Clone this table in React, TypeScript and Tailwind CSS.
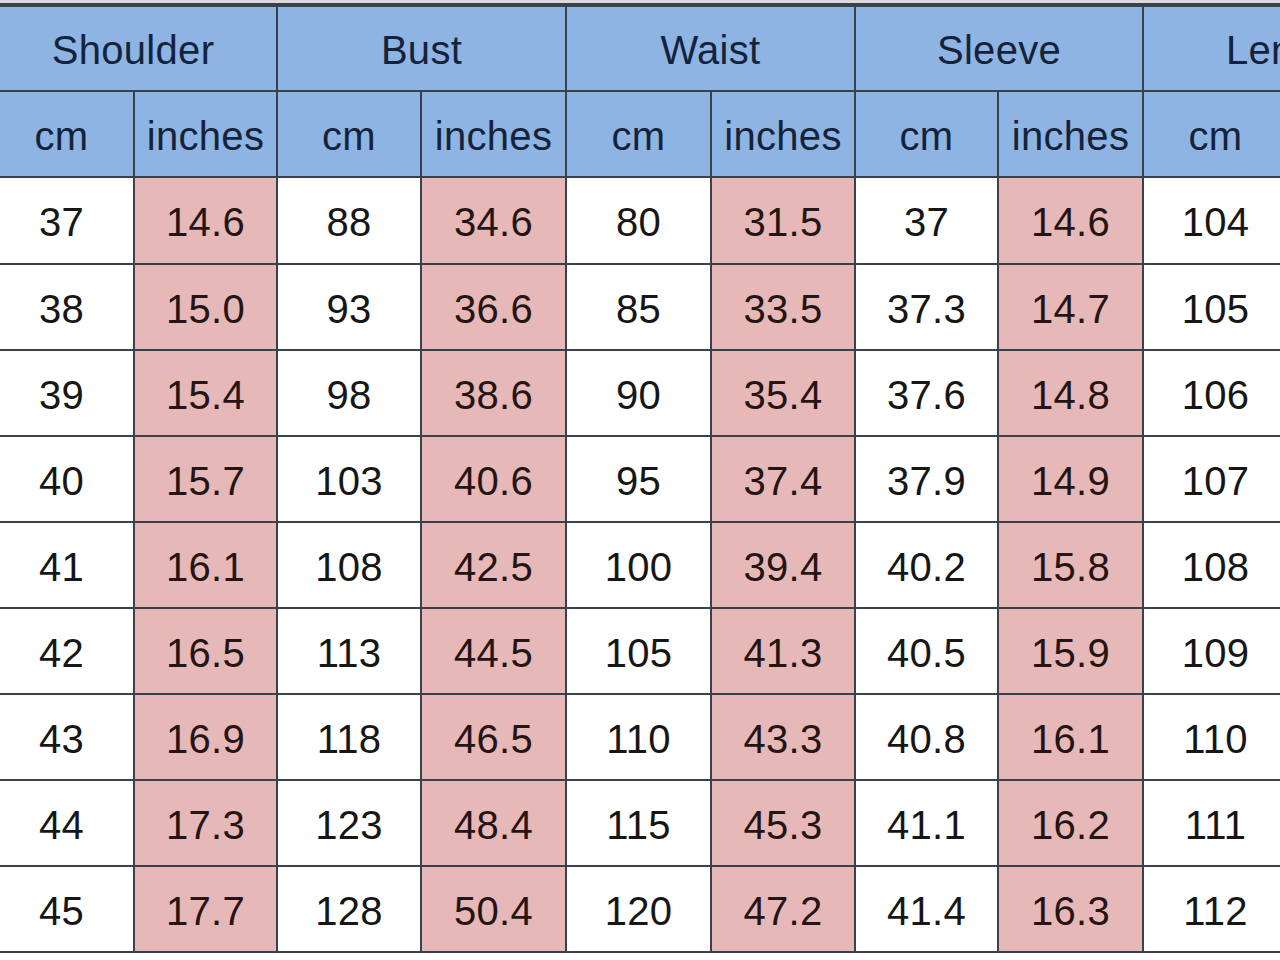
const groups = [
  {
    name: 'Shoulder',
    cm: ['37', '38', '39', '40', '41', '42', '43', '44', '45'],
    inches: ['14.6', '15.0', '15.4', '15.7', '16.1', '16.5', '16.9', '17.3', '17.7'],
  },
  {
    name: 'Bust',
    cm: ['88', '93', '98', '103', '108', '113', '118', '123', '128'],
    inches: ['34.6', '36.6', '38.6', '40.6', '42.5', '44.5', '46.5', '48.4', '50.4'],
  },
  {
    name: 'Waist',
    cm: ['80', '85', '90', '95', '100', '105', '110', '115', '120'],
    inches: ['31.5', '33.5', '35.4', '37.4', '39.4', '41.3', '43.3', '45.3', '47.2'],
  },
  {
    name: 'Sleeve',
    cm: ['37', '37.3', '37.6', '37.9', '40.2', '40.5', '40.8', '41.1', '41.4'],
    inches: ['14.6', '14.7', '14.8', '14.9', '15.8', '15.9', '16.1', '16.2', '16.3'],
  },
  {
    name: 'Length',
    cm: ['104', '105', '106', '107', '108', '109', '110', '111', '112'],
    inches: ['40.9', '41.3', '41.7', '42.1', '42.5', '42.9', '43.3', '43.7', '44.1'],
  },
];

const rows = [0, 1, 2, 3, 4, 5, 6, 7, 8];

export default function App() {
  return (
    <div
      className="w-[1280px] h-[960px] overflow-hidden bg-white"
      style={{ fontFamily: '"Liberation Sans", Arial, sans-serif' }}
    >
      <div className="h-[3px] bg-[#d9dadc]" />
      <div className="-ml-[10px] w-max grid grid-cols-[143px_141px_142px_143px_143px_142px_141px_143px_143px_143px] grid-rows-[83px_84px_85px_repeat(8,84px)] gap-[2px] bg-[#3b414b] pt-[4px] pb-[2px] text-[40px] leading-none tracking-[0.3px]">
        {/* group headings */}
        {groups.map((g) => (
          <div
            key={g.name}
            className="col-span-2 flex items-center justify-center pt-[3px] bg-[#8db4e3] text-[#15233a]"
          >
            {g.name}
          </div>
        ))}

        {/* unit headings */}
        {groups.map((g) => [
          <div key={g.name + 'cm'} className="flex items-center justify-center pt-[4px] bg-[#8db4e3] text-[#15233a]">
            cm
          </div>,
          <div key={g.name + 'in'} className="flex items-center justify-center pt-[4px] bg-[#8db4e3] text-[#15233a]">
            inches
          </div>,
        ])}

        {/* values */}
        {rows.map((r) =>
          groups.map((g) => [
            <div key={g.name + r + 'cm'} className="flex items-center justify-center pt-[3px] bg-white text-[#161616]">
              {g.cm[r]}
            </div>,
            <div key={g.name + r + 'in'} className="flex items-center justify-center pt-[3px] bg-[#e6b8b8] text-[#241414]">
              {g.inches[r]}
            </div>,
          ])
        )}
      </div>
    </div>
  );
}
